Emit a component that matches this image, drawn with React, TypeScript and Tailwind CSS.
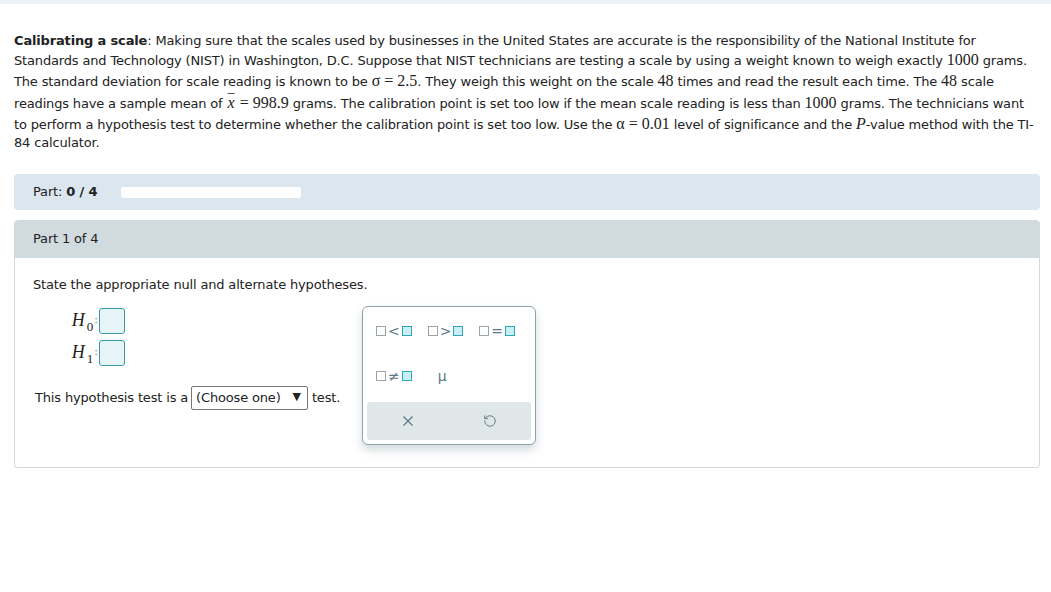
import React from "react";
import { RotateCcw } from "lucide-react";

const M = ({ children, italic }: { children: React.ReactNode; italic?: boolean }) => (
  <span className={`font-['Liberation_Serif',serif] text-[16px] leading-[21px] tracking-normal ${italic ? "italic" : ""}`}>{children}</span>
);

const Sq = ({ filled }: { filled?: boolean }) =>
  filled ? (
    <span className="inline-block w-[10px] h-[10px] border-[1.5px] border-[#2aa7bd] bg-[#c9eef4]" />
  ) : (
    <span className="inline-block w-[10px] h-[10px] border-[1.5px] border-[#97a5ab] bg-white" />
  );

const Rel = ({ op }: { op: string }) => (
  <span className="flex items-center gap-[2px] text-[#5d7884] text-[14px] leading-none">
    <Sq />
    <span className="font-['DejaVu_Sans',sans-serif]">{op}</span>
    <Sq filled />
  </span>
);

const HRow = ({ n }: { n: string }) => (
  <div className="flex items-center">
    <span className="font-['Liberation_Serif',serif] italic text-[18px] w-[34px] text-right leading-[26px]">
      H<span className="not-italic text-[13px] relative top-[5px] ml-[2px]">{n}</span>
    </span>
    <span className="text-[#777] text-[11px] w-[6px] text-center">:</span>
    <span className="inline-block w-[26px] h-[26px] border-[1.5px] border-[#3d9aa8] rounded-[3px] bg-[#e6f4f8]" />
  </div>
);

export default function App() {
  return (
    <div className="min-h-screen bg-white font-['DejaVu_Sans',sans-serif] text-[13px] tracking-[-0.16px] text-[#222]">
      <div className="h-[4px] bg-[#eef1f3]" />
      <div className="pl-[14px] pr-[14px] pt-[28px] leading-[17px]">
        <p>
          <b>Calibrating a scale</b>: Making sure that the scales used by businesses in the United States are accurate is the responsibility of the National Institute for Standards and Technology (NIST) in Washington, D.C. Suppose that NIST technicians are testing a scale by using a weight known to weigh exactly <M>1000</M> grams. The standard deviation for scale reading is known to be <M>σ = 2.5</M>. They weigh this weight on the scale <M>48</M> times and read the result each time. The <M>48</M> scale readings have a sample mean of{" "}
          <M>
            <span className="inline-block leading-[15px] pt-[4px] italic">
              <span className="overline decoration-[#555] px-[1px]">x</span>
            </span>{" "}
            = 998.9
          </M>{" "}
          grams. The calibration point is set too low if the mean scale reading is less than <M>1000</M> grams. The technicians want to perform a hypothesis test to determine whether the calibration point is set too low. Use the <M>α = 0.01</M> level of significance and the <M italic>P</M>-value method with the TI-84 calculator.
        </p>
      </div>

      <div className="ml-[14px] mr-[11px] mt-[23px] h-[36px] rounded-[4px] bg-[#dbe6ef] flex items-center pl-[19px]">
        <span className="w-[88px]">
          Part: <b>0 / 4</b>
        </span>
        <div className="h-[11px] w-[180px] rounded-[2px] bg-white" />
      </div>

      <div className="ml-[14px] mr-[11px] mt-[10px] rounded-[4px] border border-[#d1dade] border-t-0">
        <div className="h-[38px] bg-[#d1dade] rounded-t-[4px] flex items-center pl-[18px]">Part 1 of 4</div>
        <div className="pl-[18px] pt-[17px] pb-[22px]">
          <p>State the appropriate null and alternate hypotheses.</p>
          <div className="flex mt-[11px]">
            <div className="w-[329px] pt-[1px]">
              <div className="pl-[26px] flex flex-col gap-[4px]">
                <HRow n="0" />
                <HRow n="1" />
              </div>
              <div className="mt-[19px] flex items-center pl-[2px]">
                <span>This hypothesis test is a</span>
                <span className="ml-[3px] inline-flex items-center h-[24px] border border-[#777] rounded-[2px] pl-[4px] pr-[6px] gap-[12px]">
                  <span>(Choose one)</span>
                  <span className="text-[11px]">▼</span>
                </span>
                <span className="ml-[4px]">test.</span>
              </div>
            </div>
            <div className="w-[174px] h-[139px] border border-[#8ea2aa] rounded-[6px] bg-white shadow-[0_5px_8px_rgba(80,110,120,0.25)] flex flex-col p-[4px]">
              <div className="grid grid-cols-3 pl-[9px] pt-[13px] gap-y-[31px]">
                <Rel op="<" />
                <Rel op=">" />
                <Rel op="=" />
                <Rel op="≠" />
                <span className="text-[#5d7884] text-[14px] leading-none pl-[10px]">μ</span>
              </div>
              <div className="mt-auto h-[38px] rounded-[3px] bg-[#e0e7e9] grid grid-cols-2 items-center justify-items-center">
                <svg width="12" height="12" viewBox="0 0 12 12">
                  <path d="M1.5 1.5 L10.5 10.5 M10.5 1.5 L1.5 10.5" stroke="#5d7884" strokeWidth="1.3" fill="none" />
                </svg>
                <RotateCcw size={14} strokeWidth={1.6} color="#5d7884" />
              </div>
            </div>
          </div>
        </div>
      </div>
    </div>
  );
}
